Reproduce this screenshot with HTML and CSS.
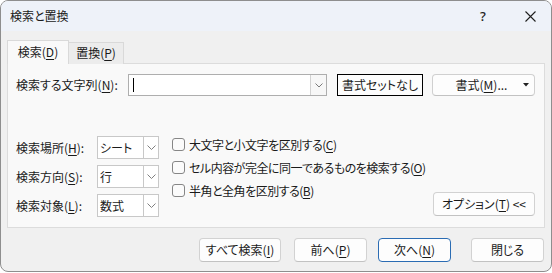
FILE: index.html
```html
<!DOCTYPE html>
<html lang="ja">
<head>
<meta charset="utf-8">
<title>検索と置換</title>
<link rel="stylesheet" href="styles.css">
</head>
<body>
<div class="window">
  <div class="titlebar">
    <span class="title">検索と置換</span>
    <span class="tb-btn help">?</span>
    <span class="tb-btn close">
      <svg width="11" height="11" viewBox="0 0 11 11"><path d="M0.5 0.5 L10.5 10.5 M10.5 0.5 L0.5 10.5" stroke="#1f1f1f" stroke-width="1.1" fill="none"/></svg>
    </span>
  </div>
  <div class="content">
    <div class="tabs">
      <div class="tab active">検索(<u>D</u>)</div>
      <div class="tab inactive">置換(<u>P</u>)</div>
    </div>
    <div class="panel">
      <div class="find-row">
        <span class="label-main">検索する文字列(<u>N</u>):</span>
        <div class="combo">
          <div class="field"><span class="caret"></span></div>
          <div class="combo-drop">
            <svg width="8" height="5" viewBox="0 0 8 5"><path d="M0.5 0.5 L4 4 L7.5 0.5" stroke="#7a7a7a" fill="none" stroke-width="1"/></svg>
          </div>
        </div>
        <div class="btn-nofmt">書式セットなし</div>
        <div class="btn-fmt"><span class="fmt-text">書式(<u>M</u>)...</span><svg class="fmt-arrow" width="6" height="4" viewBox="0 0 6 4"><path d="M0 0 H6 L3 3.5 Z" fill="#222"/></svg></div>
      </div>
      <div class="options">
        <div class="sel-grid">
          <span class="sel-label">検索場所(<u>H</u>):</span>
          <div class="select"><span class="val">シート</span><span class="sel-drop"><svg width="9" height="5" viewBox="0 0 9 5"><path d="M0.5 0.5 L4.5 4.5 L8.5 0.5" stroke="#808080" fill="none" stroke-width="1"/></svg></span></div>
          <span class="sel-label">検索方向(<u>S</u>):</span>
          <div class="select"><span class="val">行</span><span class="sel-drop"><svg width="9" height="5" viewBox="0 0 9 5"><path d="M0.5 0.5 L4.5 4.5 L8.5 0.5" stroke="#808080" fill="none" stroke-width="1"/></svg></span></div>
          <span class="sel-label">検索対象(<u>L</u>):</span>
          <div class="select"><span class="val">数式</span><span class="sel-drop"><svg width="9" height="5" viewBox="0 0 9 5"><path d="M0.5 0.5 L4.5 4.5 L8.5 0.5" stroke="#808080" fill="none" stroke-width="1"/></svg></span></div>
        </div>
        <div class="checks">
          <label class="check"><span class="box"></span>大文字と小文字を区別する(<u>C</u>)</label>
          <label class="check"><span class="box"></span>セル内容が完全に同一であるものを検索する(<u>O</u>)</label>
          <label class="check"><span class="box"></span>半角と全角を区別する(<u>B</u>)</label>
        </div>
        <div class="btn btn-options">オプション(<u>T</u>) &lt;&lt;</div>
      </div>
    </div>
    <div class="footer">
      <div class="btn btn-all">すべて検索(<u>I</u>)</div>
      <div class="btn btn-prev">前へ(<u>P</u>)</div>
      <div class="btn btn-next">次へ(<u>N</u>)</div>
      <div class="btn btn-close">閉じる</div>
    </div>
  </div>
</div>
</body>
</html>
```

FILE: styles.css
```css
html, body {
  margin: 0;
  background: #ffffff;
}
body {
  font-family: "Noto Sans CJK JP", "Noto Sans", sans-serif;
  font-size: 12px;
  color: #1a1a1a;
  font-feature-settings: "palt";
  line-height: 1;
}
u {
  text-decoration-thickness: 1px;
  text-underline-offset: 2px;
}
.window {
  width: 552px;
  height: 272px;
  box-sizing: border-box;
  border: 1px solid #8e8e8e;
  border-radius: 8px;
  overflow: hidden;
  background: #f0f0f0;
  display: flex;
  flex-direction: column;
}
.titlebar {
  height: 30px;
  flex-shrink: 0;
  background: #eef2f9;
  display: flex;
  align-items: center;
  padding-left: 9px;
}
.title {
  flex: 1;
  font-size: 12px;
}
.tb-btn {
  width: 42px;
  height: 30px;
  display: flex;
  align-items: center;
  justify-content: center;
}
.help {
  margin-right: 5px;
  font-family: "Noto Sans", sans-serif;
  font-size: 13px;
  font-weight: 500;
  color: #222;
}
.content {
  flex: 1;
  padding: 0 6px;
  display: flex;
  flex-direction: column;
}
.tabs {
  margin-top: 9px;
  height: 24px;
  margin-bottom: -1px;
  display: flex;
  align-items: flex-end;
  position: relative;
  z-index: 1;
}
.tab {
  box-sizing: border-box;
  border: 1px solid #d9d9d9;
  border-bottom: none;
  display: flex;
  align-items: center;
  justify-content: center;
}
.tab.active {
  width: 62px;
  height: 24px;
  background: #f9f9f9;
  padding-bottom: 1px;
}
.tab.inactive {
  width: 55px;
  height: 22px;
  border-left: none;
  background: #ececec;
  padding-bottom: 1px;
}
.panel {
  height: 165px;
  box-sizing: border-box;
  border: 1px solid #dcdcdc;
  background: #f9f9f9;
  padding: 10px 9px 0 8px;
  display: flex;
  flex-direction: column;
}
.find-row {
  display: flex;
  align-items: center;
  height: 22px;
}
.label-main {
  width: 112px;
  flex-shrink: 0;
}
.combo {
  width: 199px;
  height: 22px;
  box-sizing: border-box;
  border: 1px solid #aeaeae;
  background: #ffffff;
  display: flex;
}
.field {
  flex: 1;
  display: flex;
  align-items: center;
}
.caret {
  width: 1px;
  height: 14px;
  background: #000;
  margin-left: 4px;
}
.combo-drop {
  width: 16px;
  box-sizing: border-box;
  border-left: 1px solid #d2d2d2;
  background: #f7f7f7;
  display: flex;
  align-items: center;
  justify-content: center;
}
.btn-nofmt {
  margin-left: 10px;
  width: 86px;
  height: 22px;
  box-sizing: border-box;
  border: 1px solid #000;
  background: #fdfdfd;
  display: flex;
  align-items: center;
  justify-content: center;
}
.btn-fmt {
  margin-left: 9px;
  width: 103px;
  height: 22px;
  box-sizing: border-box;
  border: 1px solid #d0d0d0;
  border-bottom-color: #c2c2c2;
  border-radius: 4px;
  background: #fdfdfd;
  display: flex;
  align-items: center;
}
.fmt-text {
  flex: 1;
  text-align: center;
  padding-left: 7px;
}
.fmt-arrow {
  margin-right: 5px;
}
.options {
  margin-top: 40px;
  display: flex;
  align-items: flex-start;
}
.sel-grid {
  display: grid;
  grid-template-columns: 81px 62px;
  grid-auto-rows: 23px;
  row-gap: 6px;
  align-items: center;
  flex-shrink: 0;
}
.select {
  height: 23px;
  box-sizing: border-box;
  border: 1px solid #c8c8c8;
  background: #ffffff;
  display: flex;
}
.val {
  flex: 1;
  padding-left: 2px;
  display: flex;
  align-items: center;
}
.sel-drop {
  width: 15px;
  box-sizing: border-box;
  border-left: 1px solid #c8c8c8;
  display: flex;
  align-items: center;
  justify-content: center;
}
.checks {
  margin-left: 13px;
  margin-top: -3px;
  display: flex;
  flex-direction: column;
  flex-shrink: 0;
}
.check {
  height: 23px;
  display: flex;
  align-items: center;
  white-space: nowrap;
  letter-spacing: -0.5px;
}
.box {
  width: 13px;
  height: 13px;
  box-sizing: border-box;
  border: 1px solid #868686;
  border-radius: 3px;
  background: #fbfbfb;
  margin-right: 4px;
  flex-shrink: 0;
}
.btn {
  box-sizing: border-box;
  height: 24px;
  border: 1px solid #d2d2d2;
  border-bottom-color: #c2c2c2;
  border-radius: 4px;
  background: #fdfdfd;
  display: flex;
  align-items: center;
  justify-content: center;
  white-space: nowrap;
}
.btn-options {
  margin-left: auto;
  margin-top: 56px;
  width: 102px;
  flex-shrink: 0;
}
.footer {
  margin-top: 10px;
  padding-right: 1px;
  display: flex;
  justify-content: flex-end;
}
.btn-all {
  width: 82px;
  margin-right: 13px;
}
.btn-prev {
  width: 73px;
  margin-right: 11px;
}
.btn-next {
  width: 73px;
  margin-right: 20px;
  border-color: #2b6cb3;
}
.btn-close {
  width: 73px;
}
```
